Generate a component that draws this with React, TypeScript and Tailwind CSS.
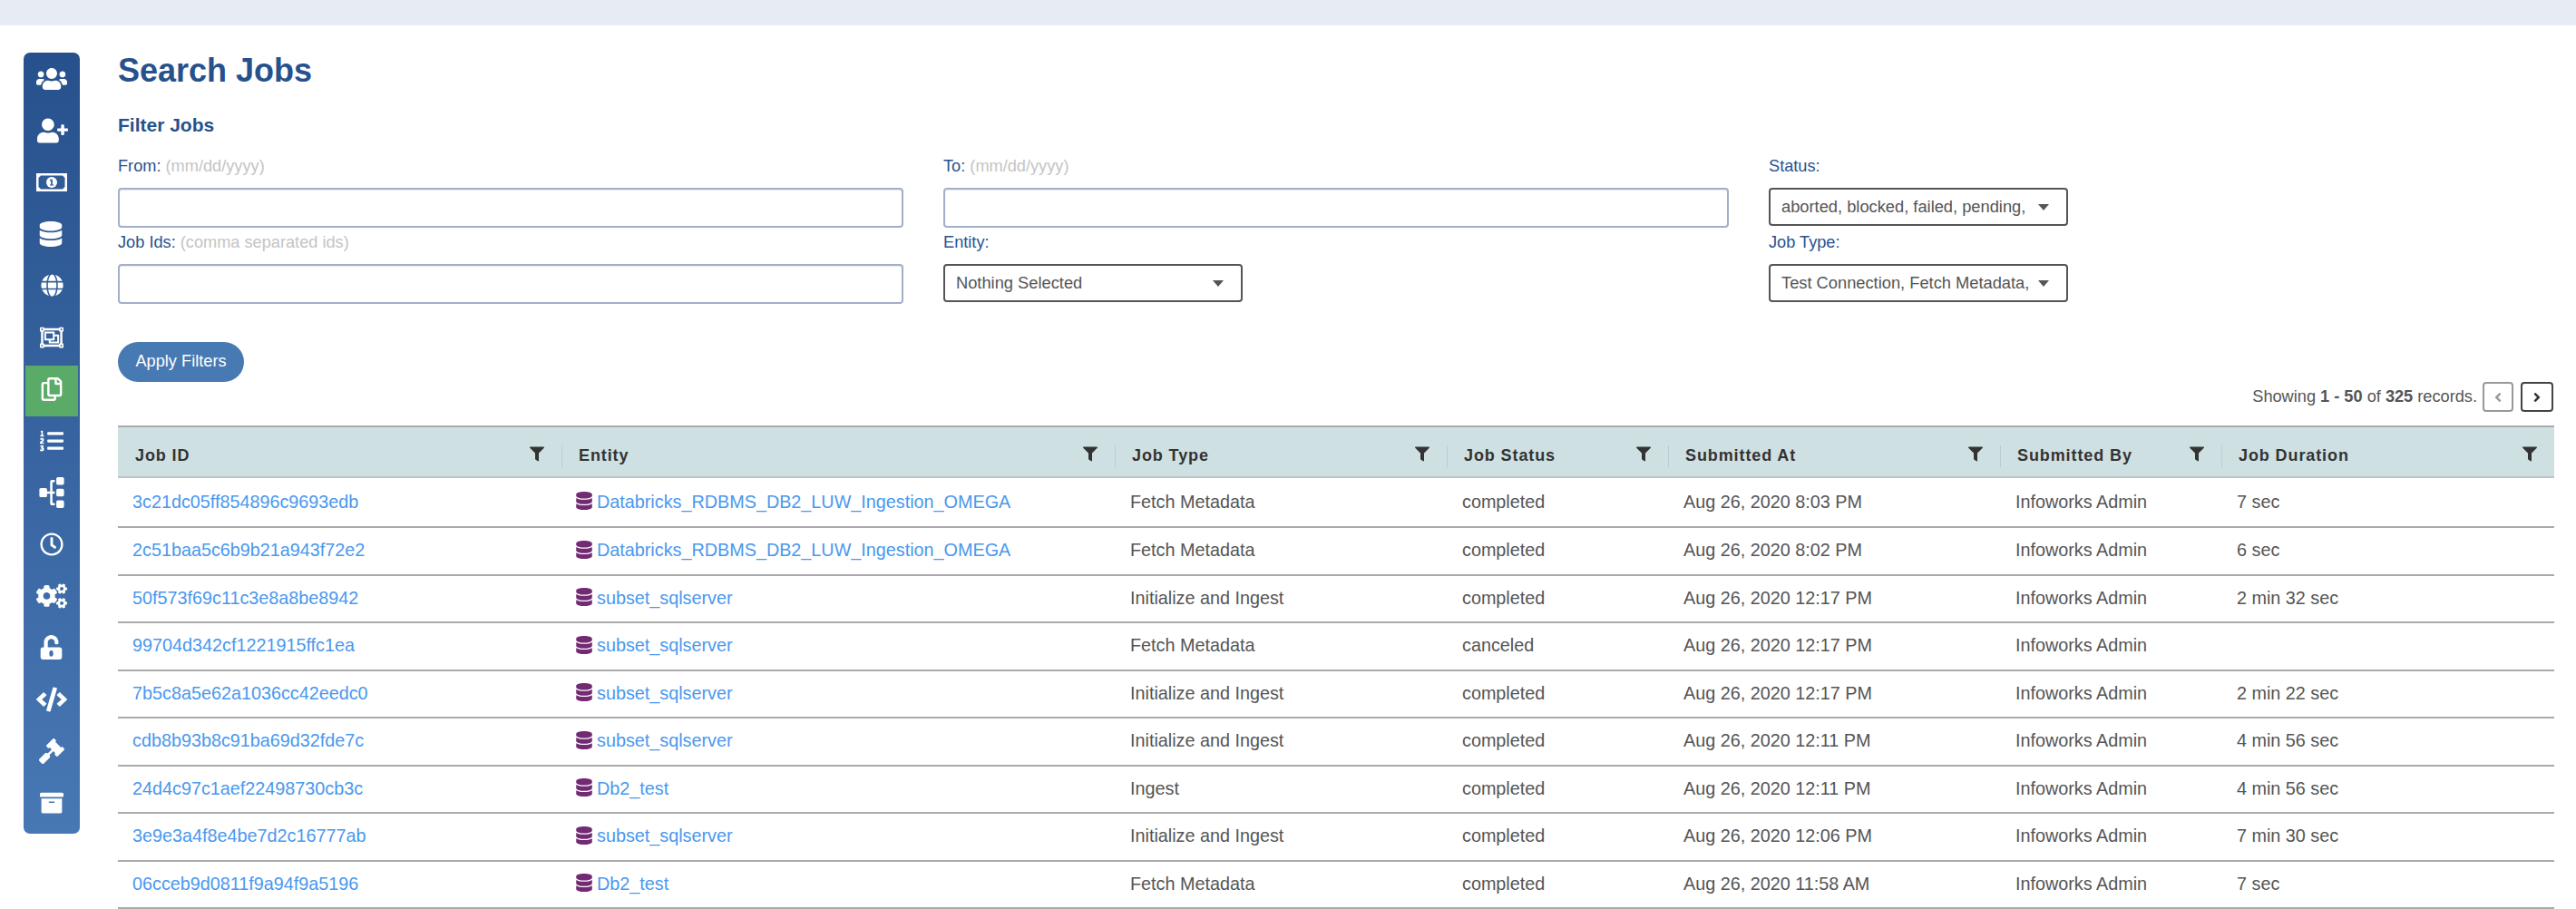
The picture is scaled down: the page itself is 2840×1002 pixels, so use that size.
import {
  FaUsers, FaUserPlus, FaDatabase, FaGlobe, FaRegObjectGroup, FaRegCopy,
  FaListOl, FaSitemap, FaRegClock, FaCogs, FaUnlockAlt, FaCode, FaGavel, FaArchive,
  FaFilter, FaAngleLeft, FaAngleRight,
} from 'react-icons/fa'

const gridCols = 'grid grid-cols-[489px_610px_366px_244px_366px_244px_367px]'

// banknote from the nav: white frame, dark notched field, coin with a 1
function BillIcon({ className }: { className?: string }) {
  return (
    <svg viewBox="0 0 34 20" className={className}>
      <rect width="34" height="20" fill="#fff" />
      <path d="M5 2.5H29L31.5 5V15L29 17.5H5L2.5 15V5Z" fill="#2f5b97" />
      <circle cx="17" cy="10" r="6" fill="#fff" />
      <path d="M15 6.8H17.9V12.4H19.2V13.6H14.9V12.4H16.2V8.3L15 8.6Z" fill="#2f5b97" />
    </svg>
  )
}

const navItems = [
  { icon: FaUsers, cls: 'w-[34px] h-[34px]' },
  { icon: FaUserPlus, cls: 'w-[34px] h-[34px] ml-[2px]' },
  { icon: BillIcon, cls: 'w-[34px] h-[20px]' },
  { icon: FaDatabase, cls: 'w-[28px] h-[28px] -ml-[2px]' },
  { icon: FaGlobe, cls: 'w-[25px] h-[25px]' },
  { icon: FaRegObjectGroup, cls: 'w-[26px] h-[26px]' },
  { icon: FaRegCopy, cls: 'w-[26px] h-[26px]', active: true },
  { icon: FaListOl, cls: 'w-[26px] h-[26px]' },
  { icon: FaSitemap, cls: 'w-[34px] h-[34px] -rotate-90' },
  { icon: FaRegClock, cls: 'w-[26px] h-[26px]' },
  { icon: FaCogs, cls: 'w-[34px] h-[34px]' },
  { icon: FaUnlockAlt, cls: 'w-[27px] h-[27px] -ml-[2px]' },
  { icon: FaCode, cls: 'w-[34px] h-[34px]' },
  { icon: FaGavel, cls: 'w-[28px] h-[28px]' },
  { icon: FaArchive, cls: 'w-[26px] h-[26px]' },
]

const columns = ['Job ID', 'Entity', 'Job Type', 'Job Status', 'Submitted At', 'Submitted By', 'Job Duration']

const DBX = 'Databricks_RDBMS_DB2_LUW_Ingestion_OMEGA'
const IW = 'Infoworks Admin'

const rows = [
  ['3c21dc05ff854896c9693edb', DBX, 'Fetch Metadata', 'completed', 'Aug 26, 2020 8:03 PM', IW, '7 sec'],
  ['2c51baa5c6b9b21a943f72e2', DBX, 'Fetch Metadata', 'completed', 'Aug 26, 2020 8:02 PM', IW, '6 sec'],
  ['50f573f69c11c3e8a8be8942', 'subset_sqlserver', 'Initialize and Ingest', 'completed', 'Aug 26, 2020 12:17 PM', IW, '2 min 32 sec'],
  ['99704d342cf1221915ffc1ea', 'subset_sqlserver', 'Fetch Metadata', 'canceled', 'Aug 26, 2020 12:17 PM', IW, ''],
  ['7b5c8a5e62a1036cc42eedc0', 'subset_sqlserver', 'Initialize and Ingest', 'completed', 'Aug 26, 2020 12:17 PM', IW, '2 min 22 sec'],
  ['cdb8b93b8c91ba69d32fde7c', 'subset_sqlserver', 'Initialize and Ingest', 'completed', 'Aug 26, 2020 12:11 PM', IW, '4 min 56 sec'],
  ['24d4c97c1aef22498730cb3c', 'Db2_test', 'Ingest', 'completed', 'Aug 26, 2020 12:11 PM', IW, '4 min 56 sec'],
  ['3e9e3a4f8e4be7d2c16777ab', 'subset_sqlserver', 'Initialize and Ingest', 'completed', 'Aug 26, 2020 12:06 PM', IW, '7 min 30 sec'],
  ['06cceb9d0811f9a94f9a5196', 'Db2_test', 'Fetch Metadata', 'completed', 'Aug 26, 2020 11:58 AM', IW, '7 sec'],
]

function Sidebar() {
  return (
    <aside className="mt-[30px] ml-[26px] h-[861px] w-[62px] shrink-0 rounded-[7px] bg-gradient-to-b from-[#27518c] to-[#4878b4] pb-[6px]">
      {navItems.map((item, i) => {
        const Icon = item.icon
        return item.active ? (
          <div key={i} className="mx-[2px] mt-[3px] -mb-[2px] flex h-[56px] items-center justify-center bg-[#5aab67] pb-[4px] text-white">
            <Icon className={item.cls} />
          </div>
        ) : (
          <div key={i} className="flex h-[57px] items-center justify-center text-white">
            <Icon className={item.cls} />
          </div>
        )
      })}
    </aside>
  )
}

function Label({ name, hint }: { name: string; hint?: string }) {
  return (
    <div className="mb-[8px] text-[18.2px] leading-[32px] text-[#2a5290]">
      {name}
      {hint && <span className="text-[#c4c4c4]"> {hint}</span>}
    </div>
  )
}

function TextField({ name, hint }: { name: string; hint: string }) {
  return (
    <div>
      <Label name={name} hint={hint} />
      <input
        type="text"
        aria-label={name}
        className="block h-[44px] w-[866px] rounded-[4px] border-2 border-[#a1b0c8] bg-white shadow-[inset_0_1px_1px_rgba(0,0,0,0.08)]"
      />
    </div>
  )
}

function SelectField({ name, value }: { name: string; value: string }) {
  return (
    <div>
      <Label name={name} />
      <div className="flex h-[42px] w-[330px] items-center justify-between rounded-[4px] border-2 border-[#555] pr-[19px] pl-[12px] text-[18.3px] whitespace-nowrap text-[#555]">
        <span>{value}</span>
        <span className="h-0 w-0 border-x-[6px] border-t-[7px] border-x-transparent border-t-[#555]" />
      </div>
    </div>
  )
}

function HeaderCell({ title, first }: { title: string; first: boolean }) {
  return (
    <div className="relative flex items-center pt-[8px] pr-[26px] pl-[19px] text-[18px] font-bold tracking-[0.9px] text-[#333]">
      {!first && <span className="absolute top-[20px] left-0 h-[24px] w-px bg-[#bccdd0]" />}
      <span>{title}</span>
      <FaFilter className="absolute top-[21px] right-[19px] h-[17px] w-[16px]" />
    </div>
  )
}

function JobsTable() {
  return (
    <div className="w-[2686px] text-[19.8px]">
      <div className={`${gridCols} h-[58px] border-y-2 border-t-[#aaa] border-b-[#b9c5c8] bg-[#cfe0e2]`}>
        {columns.map((c, i) => (
          <HeaderCell key={c} title={c} first={i === 0} />
        ))}
      </div>
      {rows.map((row, r) => (
        <div
          key={row[0]}
          className={`${gridCols} border-b-2 border-[#aaa] text-[#555] ${r === 0 ? 'h-[55px]' : 'h-[52.5px]'}`}
        >
          {row.map((cell, c) => {
            if (c === 0) {
              return <div key={c} className="flex items-center pl-[16px] text-[#4a98ee]">{cell}</div>
            }
            if (c === 1) {
              return (
                <div key={c} className="flex items-center pl-[16px] text-[#4a98ee]">
                  <FaDatabase className="mr-[5px] -mt-[3px] h-[20px] w-[18px] text-[#722a73]" />
                  {cell}
                </div>
              )
            }
            return <div key={c} className="flex items-center pl-[17px]">{cell}</div>
          })}
        </div>
      ))}
    </div>
  )
}

export default function App() {
  return (
    <div className="h-[1002px] w-[2840px] overflow-hidden bg-white font-['Liberation_Sans',sans-serif]">
      <div className="h-[28px] bg-[#e7ebf4]" />
      <div className="flex">
        <Sidebar />
        <main className="ml-[42px] flex-1">
          <h1 className="mt-[28px] text-[36px] leading-[44px] font-bold text-[#27518c]">Search Jobs</h1>
          <h2 className="mt-[26px] text-[21px] leading-[24px] font-bold text-[#27518c]">Filter Jobs</h2>
          <div className="mt-[17px] grid grid-cols-[910px_910px_330px]">
            <TextField name="From:" hint="(mm/dd/yyyy)" />
            <TextField name="To:" hint="(mm/dd/yyyy)" />
            <SelectField name="Status:" value="aborted, blocked, failed, pending," />
            <TextField name="Job Ids:" hint="(comma separated ids)" />
            <SelectField name="Entity:" value="Nothing Selected" />
            <SelectField name="Job Type:" value="Test Connection, Fetch Metadata," />
          </div>
          <button className="mt-[42px] block h-[44px] w-[139px] rounded-[22px] bg-[#4779b2] text-[18.2px] text-white">
            Apply Filters
          </button>
          <div className="flex h-[33px] w-[2685px] items-center justify-end text-[18.2px] text-[#555]">
            <span>
              Showing <b>1 - 50</b> of <b>325</b> records.
            </span>
            <span className="ml-[6px] flex h-[33px] w-[34px] items-center justify-center rounded-[4px] border-2 border-[#999] text-[#999]">
              <FaAngleLeft className="h-[16px] w-[16px]" />
            </span>
            <span className="ml-[8px] flex h-[33px] w-[36px] items-center justify-center rounded-[4px] border-2 border-[#444] text-[#333]">
              <FaAngleRight className="h-[16px] w-[16px]" />
            </span>
          </div>
          <div className="mt-[15px]">
            <JobsTable />
          </div>
        </main>
      </div>
    </div>
  )
}
